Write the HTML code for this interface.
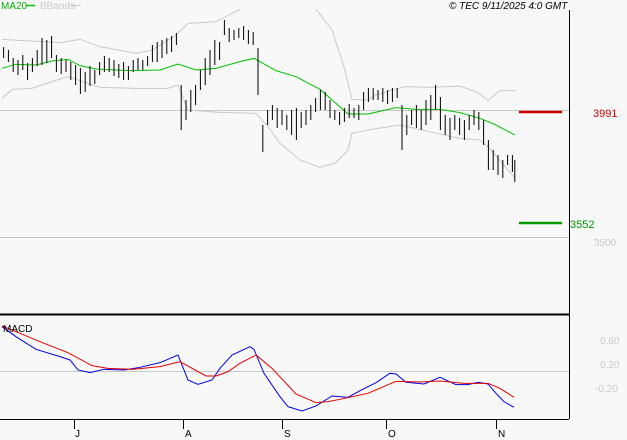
<!DOCTYPE html>
<html><head><meta charset="utf-8"><style>
html,body{margin:0;padding:0;background:#f8f8f8;}
svg{display:block;font-family:"Liberation Sans",sans-serif;}
</style></head><body>
<svg width="627" height="440" viewBox="0 0 627 440" xmlns="http://www.w3.org/2000/svg">
<rect width="627" height="440" fill="#f8f8f8"/>
<line x1="0" y1="110.5" x2="569" y2="110.5" stroke="#c8c8c8"/>
<line x1="0" y1="237.5" x2="569" y2="237.5" stroke="#c8c8c8"/>
<line x1="0" y1="371.5" x2="569" y2="371.5" stroke="#c8c8c8"/>
<line x1="569.5" y1="10" x2="569.5" y2="419" stroke="#000"/>
<line x1="0" y1="314.5" x2="569" y2="314.5" stroke="#000" stroke-width="2"/>
<line x1="0" y1="419.5" x2="569" y2="419.5" stroke="#000"/>
<g transform="scale(0.4,0.3333)" fill="none">
<polyline vector-effect="non-scaling-stroke" stroke="#c8c8c8" points="5,118 60,122 150,128 200,118 250,140 340,160 380,150 440,105 470,70 540,65 600,28"/>
<polyline vector-effect="non-scaling-stroke" stroke="#c8c8c8" points="790,28 830,90 860,200 880,298 920,300 940,285 1010,260 1080,262 1150,258 1190,275 1220,302 1250,272 1288,272"/>
<polyline vector-effect="non-scaling-stroke" stroke="#c8c8c8" points="5,295 30,268 80,265 130,245 170,230 250,262 340,265 420,265 445,255 470,330 550,337 640,340 670,380 700,430 750,480 800,502 840,488 870,450 880,400 930,388 1000,375 1080,397 1150,415 1200,420 1220,440 1288,535"/>
<polyline vector-effect="non-scaling-stroke" stroke="#00c000" points="5,205 40,193 90,195 130,183 170,178 200,197 240,207 290,210 330,212 400,210 445,192 490,210 540,205 600,185 635,175 650,185 690,212 740,230 800,268 840,310 870,342 920,342 990,323 1040,328 1100,328 1150,338 1200,355 1240,375 1287,405"/>
</g>
<g transform="scale(1.2,1)" stroke="#000" stroke-width="1" fill="none">
<path vector-effect="non-scaling-stroke" d="M3 47V58M7 50V62M11 58V72M15 60V75M19 55V70M23 63V80M27 58V72M31 50V66M35 38V65M39 40V63M43 36V58M47 55V72M51 58V74M55 60V72M59 62V80M63 65V85M67 68V94M71 72V92M75 66V86M79 70V84M83 62V75M87 56V72M91 58V72M95 60V76M99 64V78M103 62V80M107 66V80M111 60V72M115 58V70M119 60V70M123 56V66M127 45V62M131 42V62M135 40V58M139 38V54M143 36V52M147 33V45M151 85V130M155 100V120M159 90V112M163 85V105M167 70V90M171 58V85M175 50V75M179 40V65M183 42V60M187 20V35M191 28V42M195 30V40M199 28V38M203 26V40M207 30V44M211 32V45M215 48V95M219 125V152M223 110V125M227 105V120M231 108V128M235 110V125M239 115V130M243 110V135M247 108V140M251 112V128M255 110V125M259 105V120M263 98V112M267 90V110M271 92V110M275 100V118M279 110V120M283 112V125M287 108V122M291 104V118M295 108V118M299 105V120M303 92V110M307 88V102M311 88V100M315 90V100M319 88V102M323 90V104M327 88V102M331 88V98M335 105V150M339 115V135M343 110V125M347 105V128M351 110V130M355 100V125M359 95V120M363 85V110M367 97V130M371 115V135M375 118V140M379 115V130M383 118V135M387 120V140M391 115V130M395 110V125M399 112V130M403 120V145M407 140V170M411 150V170M415 155V175M419 160V178M423 155V165M427 155V172M429 160V182"/>
</g>
<g transform="translate(0,220) scale(0.4,0.3333)" fill="none">
<polyline vector-effect="non-scaling-stroke" stroke="#0000e0" points="5,320 40,350 90,388 150,410 175,420 195,450 225,458 260,448 310,450 350,442 400,428 445,405 470,480 495,493 530,480 550,445 580,405 625,380 635,388 660,460 700,530 720,560 755,573 790,558 830,528 870,532 900,512 940,488 975,460 990,462 1015,487 1060,492 1100,472 1140,494 1170,494 1195,487 1220,492 1240,520 1260,545 1285,562"/>
<polyline vector-effect="non-scaling-stroke" stroke="#e00000" points="5,318 50,340 100,365 170,398 230,437 270,445 330,448 400,440 450,425 515,468 540,468 570,455 600,430 640,405 680,445 740,522 790,548 820,545 850,538 920,520 990,484 1050,486 1100,483 1160,490 1220,490 1250,505 1285,532"/>
</g>
<line x1="519" y1="112" x2="562" y2="112" stroke="#cc0000" stroke-width="2.5"/>
<line x1="519" y1="223" x2="562" y2="223" stroke="#009900" stroke-width="2.5"/>
<g font-size="10">
<text x="593" y="117" fill="#cc0000" font-size="11">3991</text>
<text x="570" y="228" fill="#009900" font-size="11">3552</text>
<text x="594" y="246" fill="#c8c8c8">3500</text>
<text x="600" y="344" fill="#c8c8c8">0.60</text>
<text x="600" y="368" fill="#c8c8c8">0.20</text>
<text x="595" y="392" fill="#c8c8c8">-0.20</text>
<text x="1" y="9" fill="#00b000">MA20</text>
<text x="40" y="9" fill="#c8c8c8">BBands</text>
<text x="3" y="332" fill="#000">MACD</text>
<text x="449" y="9" fill="#000" font-style="italic">© TEC 9/11/2025 4:0 GMT</text>
<text x="75" y="437" fill="#000">J</text>
<text x="185" y="437" fill="#000">A</text>
<text x="284" y="437" fill="#000">S</text>
<text x="388" y="437" fill="#000">O</text>
<text x="498" y="437" fill="#000">N</text>
</g>
<line x1="26" y1="5.5" x2="35" y2="5.5" stroke="#00c000" stroke-width="1.5"/>
<line x1="71" y1="5.5" x2="81" y2="5.5" stroke="#c8c8c8"/>
<g stroke="#000">
<line x1="74.5" y1="419" x2="74.5" y2="429"/>
<line x1="183.5" y1="419" x2="183.5" y2="429"/>
<line x1="282.5" y1="419" x2="282.5" y2="429"/>
<line x1="386.5" y1="419" x2="386.5" y2="429"/>
<line x1="496.5" y1="419" x2="496.5" y2="429"/>
</g>
</svg>
</body></html>
